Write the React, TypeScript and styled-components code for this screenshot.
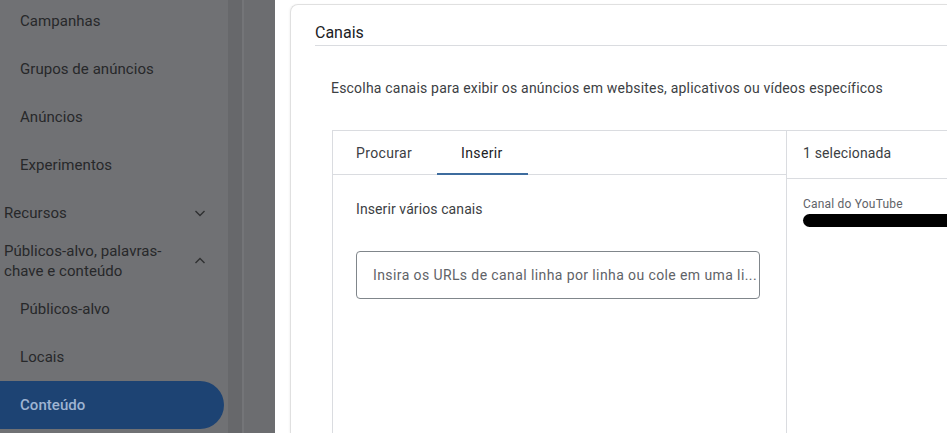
import React from "react";
import styled, { createGlobalStyle } from "styled-components";

const Global = createGlobalStyle`
  html, body { margin: 0; padding: 0; background: #ffffff; }
  body { font-family: Roboto, "Noto Sans", Arial, sans-serif; overflow: hidden; }
  * { box-sizing: border-box; }
`;

const Page = styled.div`
  display: flex;
  width: 947px;
  height: 433px;
  overflow: hidden;
`;

const Sidebar = styled.nav`
  width: 228px;
  flex: none;
  background: #707174;
  display: flex;
  flex-direction: column;
`;

const Gutter = styled.div`
  width: 47px;
  flex: none;
  background: linear-gradient(
    to right,
    #67686b 0px,
    #67686b 14px,
    #747578 14px,
    #747578 16px,
    #6c6d70 16px,
    #6c6d70 100%
  );
`;

const NavItem = styled.div<{ $active?: boolean }>`
  height: 48px;
  flex: none;
  display: flex;
  align-items: center;
  padding-left: 20px;
  margin-right: 4px;
  font-size: 15px;
  color: ${(p) => (p.$active ? "#9fb4d2" : "#27282a")};
  font-weight: ${(p) => (p.$active ? 500 : 400)};
  background: ${(p) => (p.$active ? "#1d4373" : "transparent")};
  border-radius: ${(p) => (p.$active ? "0 24px 24px 0" : "0")};
  letter-spacing: 0.05px;
`;

const FirstItem = styled(NavItem)`
  margin-top: -3px;
`;

const GroupItem = styled.div`
  height: 48px;
  flex: none;
  display: flex;
  align-items: center;
  justify-content: space-between;
  padding: 0 20px 0 4px;
  font-size: 15px;
  color: #27282a;
  line-height: 20px;
  letter-spacing: 0.05px;
`;

const Chevron = styled.svg`
  width: 16px;
  height: 16px;
  flex: none;
`;

const Main = styled.main`
  flex: 1;
  background: #ffffff;
  padding: 4px 0 0 15px;
  display: flex;
  min-width: 0;
`;

const Card = styled.section`
  flex: 1;
  border: 1px solid #e0e0e0;
  border-right: none;
  border-bottom: none;
  border-radius: 8px 0 0 0;
  box-shadow: -1px 0 2px rgba(0, 0, 0, 0.04);
  display: flex;
  flex-direction: column;
  min-width: 0;
`;

const CardHeader = styled.h2`
  margin: 0 0 0 24px;
  height: 41px;
  padding-top: 18px;
  font-size: 16px;
  font-weight: 400;
  color: #202124;
  border-bottom: 1px solid #dadce0;
  line-height: 20px;
`;

const Description = styled.p`
  margin: 32px 0 0 40px;
  font-size: 14px;
  line-height: 20px;
  color: #3c4043;
  letter-spacing: 0.2px;
`;

const Picker = styled.div`
  margin: 32px 0 0 41px;
  flex: 1;
  border: 1px solid #dadce0;
  border-right: none;
  border-bottom: none;
  display: flex;
  min-width: 0;
`;

const LeftPane = styled.div`
  width: 454px;
  flex: none;
  display: flex;
  flex-direction: column;
  border-right: 1px solid #dadce0;
`;

const TabBar = styled.div`
  display: flex;
  height: 44px;
  border-bottom: 1px solid #dadce0;
`;

const Tab = styled.div<{ $active?: boolean }>`
  padding: 0 25px 0 ${(p) => (p.$active ? "24px" : "23px")};
  display: flex;
  align-items: center;
  font-size: 14px;
  color: ${(p) => (p.$active ? "#202124" : "#3c4043")};
  position: relative;
  letter-spacing: 0.35px;
  &::after {
    content: "";
    display: ${(p) => (p.$active ? "block" : "none")};
    position: absolute;
    left: 0;
    right: 0;
    bottom: -1px;
    height: 2px;
    background: #3d6c9e;
  }
`;

const PaneBody = styled.div`
  padding: 25px 26px 0 23px;
  display: flex;
  flex-direction: column;
`;

const Label = styled.div`
  font-size: 14px;
  line-height: 18px;
  color: #3c4043;
  letter-spacing: 0.1px;
`;

const UrlInput = styled.div`
  margin-top: 33px;
  height: 48px;
  border: 1px solid #80868b;
  border-radius: 4px;
  display: flex;
  align-items: center;
  padding: 0 16px;
  font-size: 14px;
  color: #5f6368;
  letter-spacing: 0.4px;
  white-space: nowrap;
  overflow: hidden;
`;

const RightPane = styled.div`
  flex: 1;
  display: flex;
  flex-direction: column;
  min-width: 0;
`;

const SelectedHeader = styled.div`
  height: 48px;
  display: flex;
  align-items: center;
  padding: 0 16px 3px;
  font-size: 14px;
  color: #3c4043;
  border-bottom: 1px solid #dadce0;
  white-space: nowrap;
  letter-spacing: 0.15px;
`;

const SelectedItem = styled.div`
  padding: 17px 0 0 16px;
  display: flex;
  flex-direction: column;
`;

const ItemType = styled.div`
  font-size: 12px;
  line-height: 16px;
  color: #5f6368;
  letter-spacing: 0.2px;
  white-space: nowrap;
`;

const Redacted = styled.div`
  margin-top: 2px;
  height: 13px;
  width: 200px;
  background: #000000;
  border-radius: 7px 0 0 7px;
`;

const Down = () => (
  <Chevron viewBox="0 0 16 16">
    <path d="M3.5 6 L8 10.5 L12.5 6" fill="none" stroke="#2f3032" strokeWidth="1.4" />
  </Chevron>
);

const Up = () => (
  <Chevron viewBox="0 0 16 16">
    <path d="M3.5 10 L8 5.5 L12.5 10" fill="none" stroke="#2f3032" strokeWidth="1.4" />
  </Chevron>
);

export default function App() {
  return (
    <>
      <Global />
      <Page>
        <Sidebar>
          <FirstItem>Campanhas</FirstItem>
          <NavItem>Grupos de anúncios</NavItem>
          <NavItem>Anúncios</NavItem>
          <NavItem>Experimentos</NavItem>
          <GroupItem>
            <span>Recursos</span>
            <Down />
          </GroupItem>
          <GroupItem>
            <span>
              Públicos-alvo, palavras-
              <br />
              chave e conteúdo
            </span>
            <Up />
          </GroupItem>
          <NavItem>Públicos-alvo</NavItem>
          <NavItem>Locais</NavItem>
          <NavItem $active>Conteúdo</NavItem>
        </Sidebar>
        <Gutter />
        <Main>
          <Card>
            <CardHeader>Canais</CardHeader>
            <Description>
              Escolha canais para exibir os anúncios em websites, aplicativos ou vídeos específicos
            </Description>
            <Picker>
              <LeftPane>
                <TabBar>
                  <Tab>Procurar</Tab>
                  <Tab $active>Inserir</Tab>
                </TabBar>
                <PaneBody>
                  <Label>Inserir vários canais</Label>
                  <UrlInput>Insira os URLs de canal linha por linha ou cole em uma li...</UrlInput>
                </PaneBody>
              </LeftPane>
              <RightPane>
                <SelectedHeader>1 selecionada</SelectedHeader>
                <SelectedItem>
                  <ItemType>Canal do YouTube</ItemType>
                  <Redacted />
                </SelectedItem>
              </RightPane>
            </Picker>
          </Card>
        </Main>
      </Page>
    </>
  );
}
